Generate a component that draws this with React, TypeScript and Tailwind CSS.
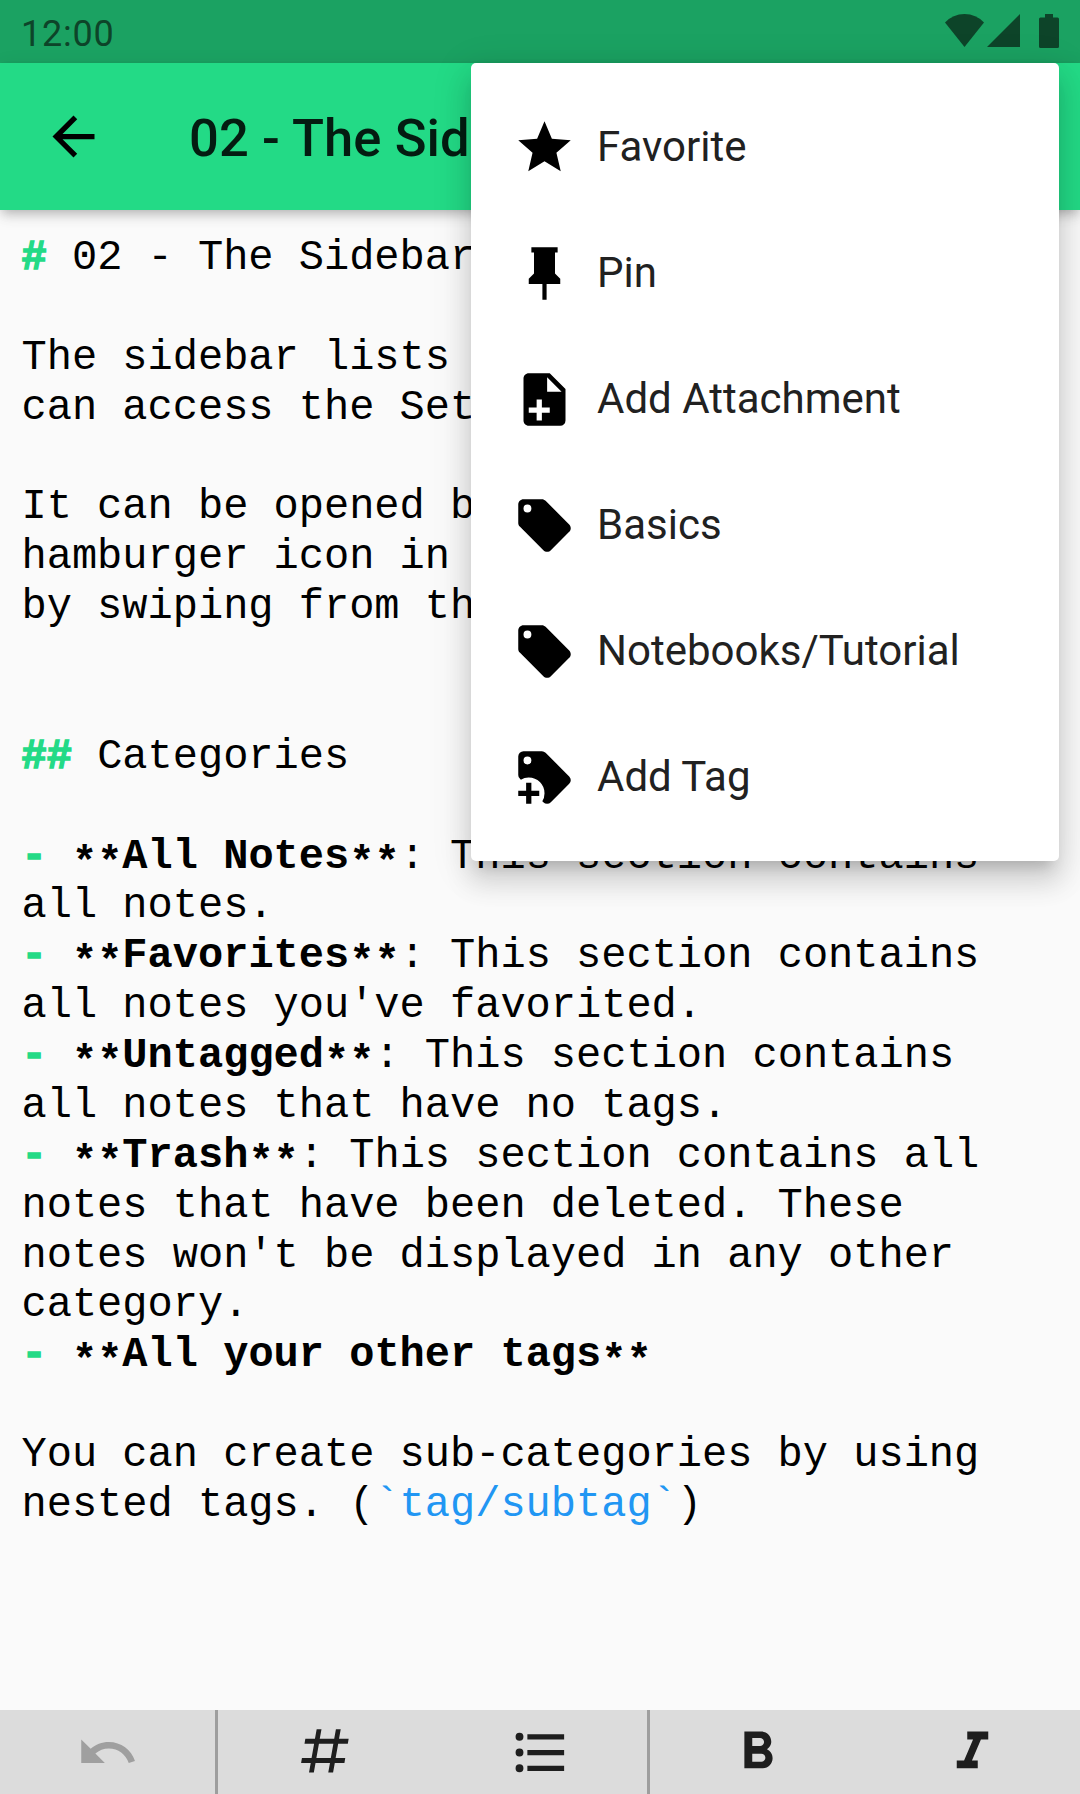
import type { ReactNode } from "react";

const icons = {
  back: "M20 11H7.83l5.59-5.59L12 4l-8 8 8 8 1.41-1.41L7.83 13H20v-2z",
  star: "M12,17.27L18.18,21L16.54,13.97L22,9.24L14.81,8.62L12,2L9.19,8.62L2,9.24L7.45,13.97L5.82,21L12,17.27Z",
  pin: "M16,12V4H17V2H7V4H8V12L6,14V16H11.2V22H12.8V16H18V14L16,12Z",
  filePlus:
    "M13,9H18.5L13,3.5V9M6,2H14L20,8V20A2,2 0 0,1 18,22H6C4.89,22 4,21.1 4,20V4C4,2.89 4.89,2 6,2M11,15V12H9V15H6V17H9V20H11V17H14V15H11Z",
  tag: "M5.5,7A1.5,1.5 0 0,1 4,5.5A1.5,1.5 0 0,1 5.5,4A1.5,1.5 0 0,1 7,5.5A1.5,1.5 0 0,1 5.5,7M21.41,11.58L12.41,2.58C12.05,2.22 11.55,2 11,2H4C2.89,2 2,2.89 2,4V11C2,11.55 2.22,12.05 2.59,12.41L11.58,21.41C11.95,21.77 12.45,22 13,22C13.55,22 14.05,21.77 14.41,21.41L21.41,14.41C21.78,14.05 22,13.55 22,13C22,12.44 21.77,11.94 21.41,11.58Z",
  tagPlus:
    "M21.41 11.58L12.41 2.58A2 2 0 0 0 11 2H4A2 2 0 0 0 2 4V11A2 2 0 0 0 2.59 12.42L3 12.82A5.62 5.62 0 0 1 6 12A6 6 0 0 1 12 18A5.62 5.62 0 0 1 11.17 21L11.57 21.4A2 2 0 0 0 13 22A2 2 0 0 0 14.41 21.41L21.41 14.41A2 2 0 0 0 22 13A2 2 0 0 0 21.41 11.58M5.5 7A1.5 1.5 0 1 1 7 5.5A1.5 1.5 0 0 1 5.5 7M10 19H7V22H5V19H2V17H5V14H7V17H10Z",
  undo: "M12.5,8C9.85,8 7.45,9 5.6,10.6L2,7V16H11L7.38,12.38C8.77,11.22 10.54,10.5 12.5,10.5C16.04,10.5 19.05,12.81 20.1,16L22.47,15.22C21.08,11.03 17.15,8 12.5,8Z",
  pound:
    "M5.41,21L6.12,17H2.12L2.47,15H6.47L7.53,9H3.53L3.88,7H7.88L8.59,3H10.59L9.88,7H15.88L16.59,3H18.59L17.88,7H21.88L21.53,9H17.53L16.47,15H20.47L20.12,17H16.12L15.41,21H13.41L14.12,17H8.12L7.41,21H5.41M9.53,9L8.47,15H14.47L15.53,9H9.53Z",
  list: "M4 10.5a1.5 1.5 0 1 0 0 3 1.5 1.5 0 0 0 0-3zm0-6a1.5 1.5 0 1 0 0 3 1.5 1.5 0 0 0 0-3zm0 12a1.5 1.5 0 1 0 0 3 1.5 1.5 0 0 0 0-3zM7 19h14v-2H7v2zm0-6h14v-2H7v2zm0-8v2h14V5H7z",
  bold: "M15.6 10.79c.97-.67 1.65-1.77 1.65-2.79 0-2.26-1.75-4-4-4H7v14h7.04c2.09 0 3.71-1.7 3.71-3.79 0-1.52-.86-2.82-2.15-3.42zM10 6.5h3c.83 0 1.5.67 1.5 1.5s-.67 1.5-1.5 1.5h-3v-3zm3.5 9H10v-3h3.5c.83 0 1.5.67 1.5 1.5s-.67 1.5-1.5 1.5z",
  italic: "M10 4v3h2.21l-3.42 8H6v3h8v-3h-2.21l3.42-8H18V4z",
};

function Icon({ name, className = "size-[63px]" }: { name: keyof typeof icons; className?: string }) {
  return (
    <svg viewBox="0 0 24 24" fill="currentColor" fillRule="evenodd" className={`shrink-0 ${className}`}>
      <path d={icons[name]} />
    </svg>
  );
}

function StatusBar() {
  return (
    <div className="flex h-[63px] items-start justify-between bg-[#1ba262] pr-[21px] pl-[21px] text-[#0d4429]">
      <span className="pt-[13px] text-[36px] leading-[42px] tracking-[0.8px]">12:00</span>
      <div className="flex items-start pt-[14px]">
        <svg viewBox="0 0 39 33" className="h-[33px] w-[39px]" fill="currentColor">
          <path d="M0 8.5Q8 0 19.5 0T39 8.5L19.5 33Z" />
        </svg>
        <svg viewBox="0 0 33 33" className="ml-[3px] h-[33px] w-[33px]" fill="currentColor">
          <path d="M0 33L33 0V33Z" />
        </svg>
        <svg viewBox="0 0 20 34" className="ml-[19px] h-[34px] w-[20px]" fill="currentColor">
          <path d="M6 0H14V3.5H18.5A1.5 1.5 0 0 1 20 5V32.5A1.5 1.5 0 0 1 18.5 34H1.5A1.5 1.5 0 0 1 0 32.5V5A1.5 1.5 0 0 1 1.5 3.5H6Z" />
        </svg>
      </div>
    </div>
  );
}

function AppBar() {
  return (
    <header className="relative flex h-[147px] items-center bg-[#23da86] pl-[42px] shadow-[0_5px_10px_-3px_rgba(0,0,0,0.2),0_8px_12px_rgba(0,0,0,0.07),0_2px_18px_rgba(0,0,0,0.07)]">
      <Icon name="back" />
      <h1 className="ml-[84px] pt-[4px] text-[52.5px] font-medium tracking-[0.1px] text-black/87">02 - The Sidebar</h1>
    </header>
  );
}

function Mark({ children }: { children: ReactNode }) {
  return <span className="font-bold text-[#23da86] [-webkit-text-stroke:1.5px_#23da86]">{children}</span>;
}

function Stars() {
  return <span className="relative top-[7px]">**</span>;
}

function Strong({ children }: { children: ReactNode }) {
  return (
    <strong className="font-bold">
      <Stars />
      {children}
      <Stars />
    </strong>
  );
}

const lines: ReactNode[] = [
  <><Mark>#</Mark> 02 - The Sidebar</>,
  "",
  "The sidebar lists",
  "can access the Settings",
  "",
  "It can be opened by",
  "hamburger icon in",
  "by swiping from the",
  "",
  "",
  <><Mark>##</Mark> Categories</>,
  "",
  <><Mark>-</Mark> <Strong>All Notes</Strong>: This section contains</>,
  "all notes.",
  <><Mark>-</Mark> <Strong>Favorites</Strong>: This section contains</>,
  "all notes you've favorited.",
  <><Mark>-</Mark> <Strong>Untagged</Strong>: This section contains</>,
  "all notes that have no tags.",
  <><Mark>-</Mark> <Strong>Trash</Strong>: This section contains all</>,
  "notes that have been deleted. These",
  "notes won't be displayed in any other",
  "category.",
  <><Mark>-</Mark> <Strong>All your other tags</Strong></>,
  "",
  "You can create sub-categories by using",
  <>nested tags. (<span className="text-[#2196f3]">`tag/subtag`</span>)</>,
];

function Editor() {
  return (
    <main className="flex-1 overflow-hidden pt-[24px] pl-[21.5px] font-['Liberation_Mono',monospace] text-[42px] text-black">
      {lines.map((line, i) => (
        <div key={i} className="h-[49.89px] leading-[49.89px] whitespace-pre">
          {line}
        </div>
      ))}
    </main>
  );
}

const menuItems: { icon: keyof typeof icons; label: string }[] = [
  { icon: "star", label: "Favorite" },
  { icon: "pin", label: "Pin" },
  { icon: "filePlus", label: "Add Attachment" },
  { icon: "tag", label: "Basics" },
  { icon: "tag", label: "Notebooks/Tutorial" },
  { icon: "tagPlus", label: "Add Tag" },
];

function Menu() {
  return (
    <ul className="absolute top-[63px] right-[21px] w-[588px] rounded-[5px] bg-white py-[21px] shadow-[0_13px_13px_-8px_rgba(0,0,0,0.17),0_21px_26px_3px_rgba(0,0,0,0.1),0_8px_37px_5px_rgba(0,0,0,0.1)]">
      {menuItems.map((item, i) => (
        <li key={i} className="flex h-[126px] items-center gap-[21px] px-[42px]">
          <Icon name={item.icon} />
          <span className="pb-[2px] text-[42px] text-[#212121]">{item.label}</span>
        </li>
      ))}
    </ul>
  );
}

function ToolCell({ children }: { children: ReactNode }) {
  return <div className="flex flex-1 items-center justify-center">{children}</div>;
}

function Divider() {
  return <div className="w-[2.625px] bg-[#9e9e9e]" />;
}

function Toolbar() {
  return (
    <footer className="flex h-[84px] bg-[#dcdcdc] text-[#1e1e1e]">
      <ToolCell><Icon name="undo" className="size-[63px] text-[#9f9f9f]" /></ToolCell>
      <Divider />
      <ToolCell><Icon name="pound" className="mb-[2px] size-[57.75px]" /></ToolCell>
      <ToolCell><Icon name="list" /></ToolCell>
      <Divider />
      <ToolCell><Icon name="bold" /></ToolCell>
      <ToolCell><Icon name="italic" /></ToolCell>
    </footer>
  );
}

export default function App() {
  return (
    <div className="relative flex h-[1794px] w-[1080px] flex-col overflow-hidden bg-[#fafafa] font-[Roboto,sans-serif]">
      <StatusBar />
      <AppBar />
      <Editor />
      <Toolbar />
      <Menu />
    </div>
  );
}
